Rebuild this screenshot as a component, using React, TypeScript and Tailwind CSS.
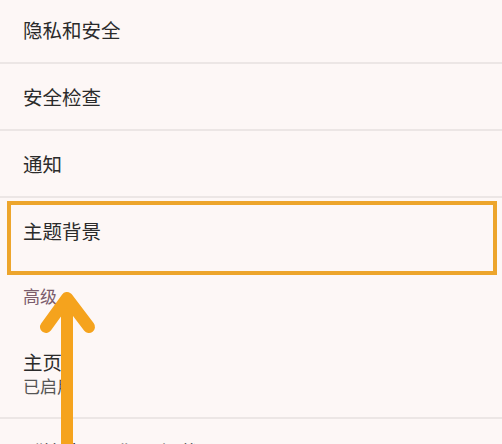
import React from 'react';

const font = { fontFamily: '"Noto Sans CJK SC", "Noto Sans", sans-serif' };

function Row({ label, highlighted }: { label: string; highlighted?: boolean }) {
  return (
    <div className="relative h-[65px] flex items-center px-[23px]">
      <span className="text-[19.5px] leading-[26px] text-[#2b2b2b]">{label}</span>
      {highlighted && (
        // hand-drawn highlight box over the row
        <div className="absolute left-[7px] right-[5px] top-[3px] h-[74px] border-[4px] border-[#eda52c]" />
      )}
    </div>
  );
}

function Divider() {
  return <div className="h-[2px] bg-[#ece6e5]" />;
}

export default function App(): React.ReactNode {
  return (
    <div className="relative w-[502px] h-[444px] overflow-hidden bg-[#fdf7f6]" style={font}>
      <div className="-mt-[3px]">
        <Row label="隐私和安全" />
        <Divider />
        <Row label="安全检查" />
        <Divider />
        <Row label="通知" />
        <Divider />
        <Row label="主题背景" highlighted />

        <div className="pt-[22px] px-[23px] text-[17px] leading-[22px] text-[#7b5c6c]">高级</div>

        <div className="pt-[42px] pb-[20px] px-[23px]">
          <div className="text-[19.5px] leading-[26px] text-[#2b2b2b]">主页</div>
          <div className="text-[17px] leading-[22px] text-[#555]">已启用</div>
        </div>
        <Divider />
        <div className="pt-[20px] px-[23px] text-[19.5px] leading-[26px] text-[#2b2b2b]">“快速网页”预加载</div>
      </div>

      {/* annotation arrow */}
      <svg className="absolute left-0 top-0" width="502" height="444" viewBox="0 0 502 444">
        <g stroke="#f5a31d" strokeWidth="12" strokeLinecap="round" strokeLinejoin="round" fill="none">
          <line x1="67" y1="302" x2="67" y2="460" />
          <polyline points="46,327 67,298 89,327" />
        </g>
      </svg>
    </div>
  );
}
